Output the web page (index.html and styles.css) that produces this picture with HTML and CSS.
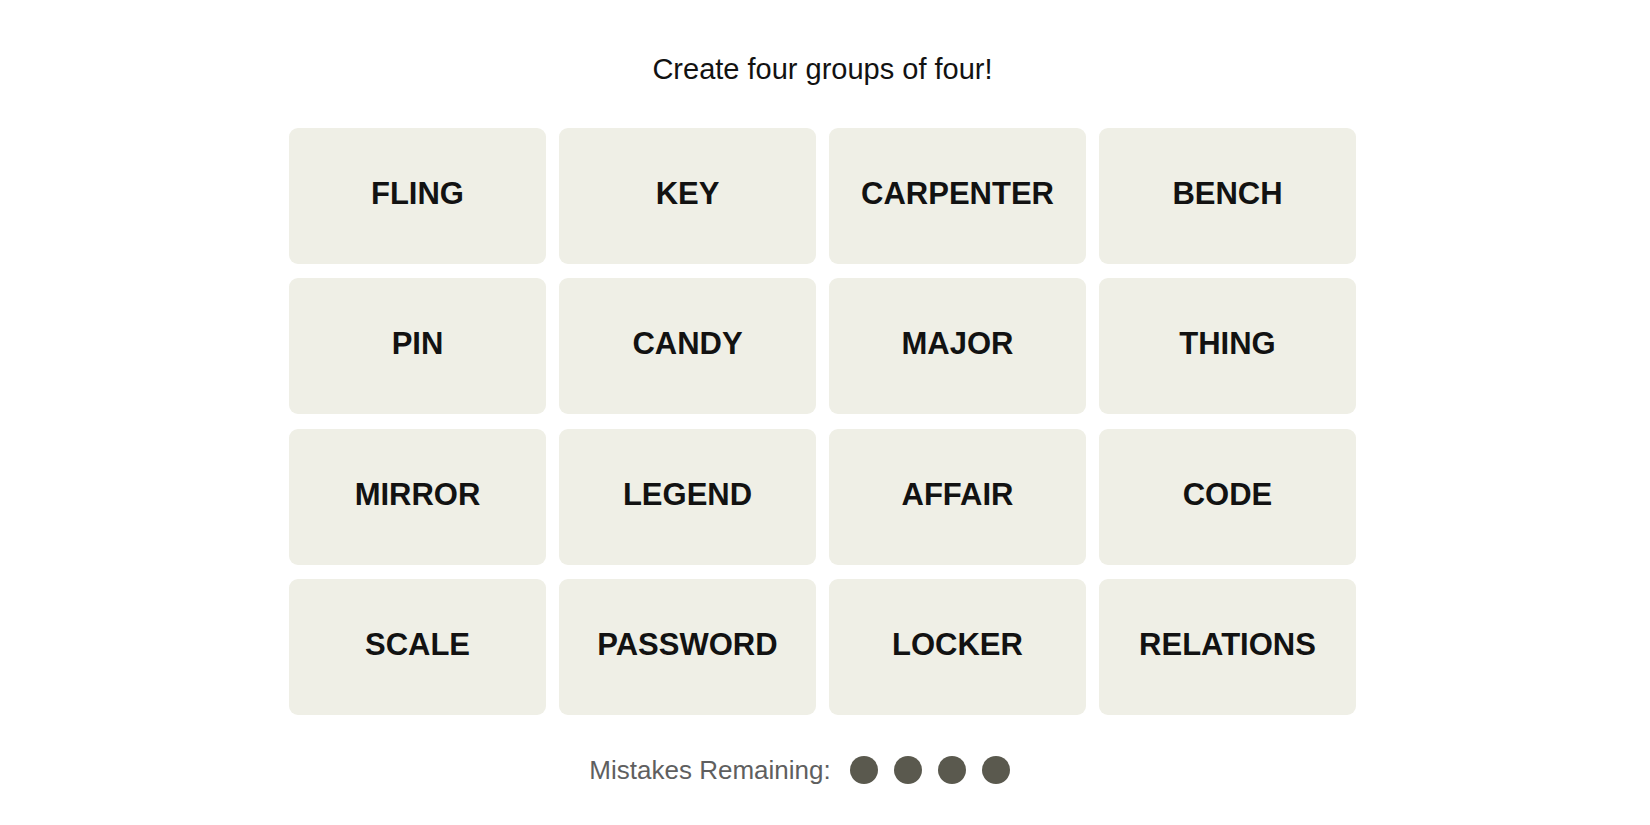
FILE: index.html
```html
<!DOCTYPE html>
<html lang="en">
<head>
<meta charset="utf-8">
<title>Connections</title>
<link rel="stylesheet" href="styles.css">
</head>
<body>
<main class="game">
  <p class="prompt">Create four groups of four!</p>
  <div class="board">
    <button class="tile">FLING</button>
    <button class="tile">KEY</button>
    <button class="tile">CARPENTER</button>
    <button class="tile">BENCH</button>
    <button class="tile">PIN</button>
    <button class="tile">CANDY</button>
    <button class="tile">MAJOR</button>
    <button class="tile">THING</button>
    <button class="tile">MIRROR</button>
    <button class="tile">LEGEND</button>
    <button class="tile">AFFAIR</button>
    <button class="tile">CODE</button>
    <button class="tile">SCALE</button>
    <button class="tile">PASSWORD</button>
    <button class="tile">LOCKER</button>
    <button class="tile">RELATIONS</button>
  </div>
  <div class="mistakes">
    <span class="mistakes-label">Mistakes Remaining:</span>
    <span class="dots">
      <span class="dot"></span>
      <span class="dot"></span>
      <span class="dot"></span>
      <span class="dot"></span>
    </span>
  </div>
</main>
</body>
</html>
```
FILE: styles.css
```css
* { box-sizing: border-box; }
html, body {
  margin: 0;
  padding: 0;
  background: #ffffff;
}
body {
  font-family: "Liberation Sans", Arial, sans-serif;
  color: #121212;
}
.game {
  display: flex;
  flex-direction: column;
  align-items: center;
  padding: 52px 5px 0 0;
}
.prompt {
  margin: 0;
  font-size: 29px;
  line-height: 34px;
  font-weight: 400;
  color: #121212;
}
.board {
  margin-top: 41.5px;
  display: grid;
  grid-template-columns: repeat(4, 257px);
  grid-auto-rows: 136px;
  column-gap: 13px;
  row-gap: 14.5px;
}
.tile {
  border: none;
  margin: 0;
  background: #efefe6;
  border-radius: 9px;
  font-family: "Liberation Sans", Arial, sans-serif;
  font-weight: 700;
  font-size: 31px;
  color: #121212;
  display: flex;
  align-items: center;
  justify-content: center;
  padding: 0 0 4px 0;
}
.mistakes {
  margin-top: 38px;
  display: flex;
  align-items: center;
  height: 34px;
  padding-right: 46px;
}
.mistakes-label {
  font-size: 26px;
  color: #5f5f5f;
  margin-right: 19px;
}
.dots {
  display: flex;
  gap: 16px;
}
.dot {
  width: 28px;
  height: 28px;
  border-radius: 50%;
  background: #5a594e;
}
```
